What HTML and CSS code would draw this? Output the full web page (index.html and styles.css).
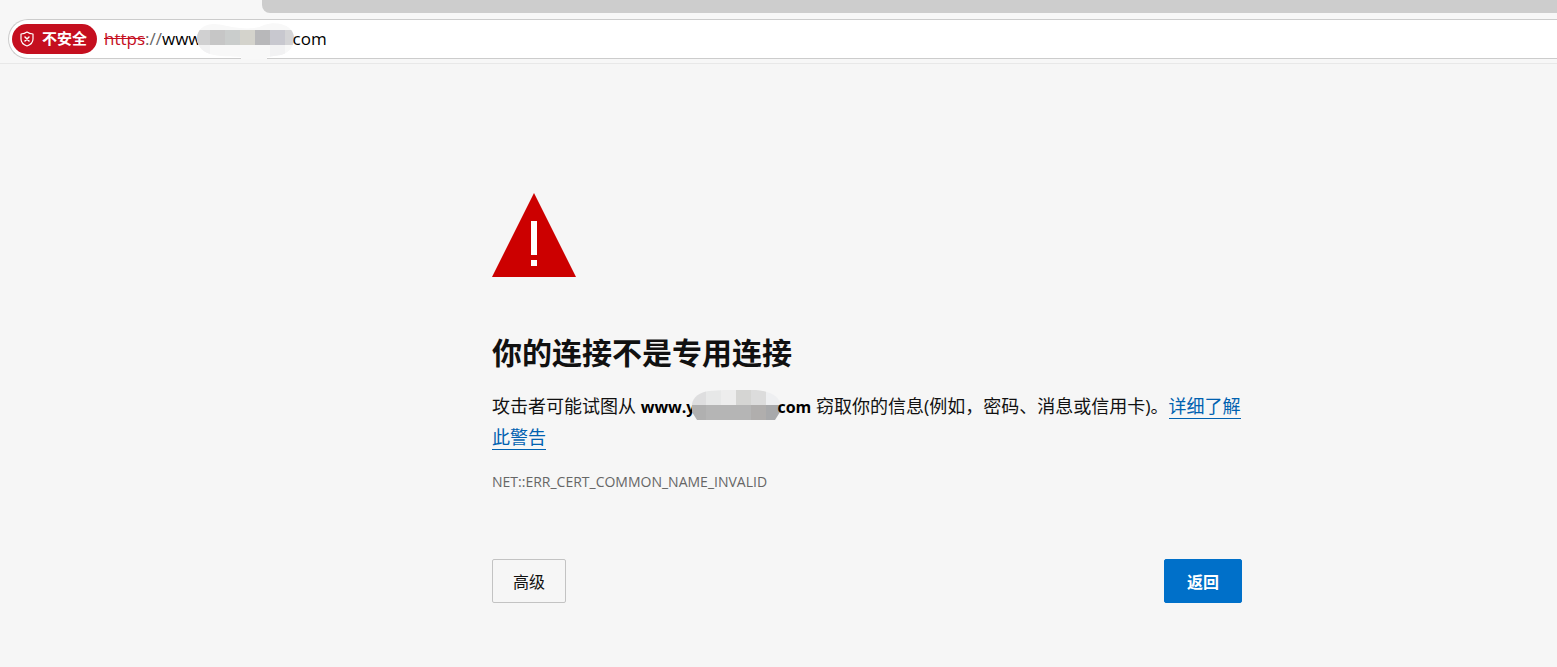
FILE: index.html
```
<!DOCTYPE html>
<html lang="zh-CN">
<head>
	<meta charset="utf-8">
	<title>隐私错误</title>
	<link rel="stylesheet" href="styles.css">
</head>

<body>
	<header class="toolbar">
		<div class="tabstrip"></div>
		<div class="address-bar">
			<button type="button" class="badge">
				<svg width="16" height="16" viewBox="0 0 16 16" fill="none" stroke="#fff" stroke-width="1.200" stroke-linecap="round" stroke-linejoin="round">
					<path d="M8 1C6.300 2.300 4.300 2.900 2 3v5c0 3.500 2.200 5.700 6 7 3.800-1.300 6-3.500 6-7V3C11.700 2.900 9.700 2.300 8 1z"/>
					<path d="M6 6l4 4M10 6l-4 4" stroke-width="1.500"/>
				</svg>
				<span>不安全</span>
			</button>
			<span class="url"><del>https</del><span class="sep">://</span>www</span>
			<svg class="url-mask" width="98" height="36" viewBox="0 0 98 36">
				<clipPath id="urlClip">
					<path d="M0 15C0 7 7 1 17 1c8 0 14 3 26 4s18 0 24-3c6-2 12-2 17-1 8 2 13 7 13 14 0 9-5 15-13 17l-14 2v2H44v-2c-12-1-21 0-31-3C4 28 0 22 0 15z"/>
				</clipPath>
				<g clip-path="url(#urlClip)" shape-rendering="crispEdges">
					<path fill="#f8f8f8" d="M0 0h98v36H0z"/>
					<path fill="#f2f2f3" d="M0 22h13v14H0zM73 22h15v14H73z"/>
					<path fill="#d0d0d1" d="M0 7h13v15H0z"/>
					<path fill="#c6c6c6" d="M13 7h15v15H13z"/>
					<path fill="#cacdcc" d="M28 7h15v15H28z"/>
					<path fill="#d4d3cc" d="M43 7h15v15H43z"/>
					<path fill="#b8b8ba" d="M58 7h15v15H58z"/>
					<path fill="#c8c8cf" d="M73 7h15v15H73z"/>
					<path fill="#d4d4d6" d="M88 7h10v15H88z"/>
				</g>
			</svg>
			<input class="url-input" type="text" value="com" aria-label="地址栏" spellcheck="false">
		</div>
	</header>

	<main class="page">
		<div class="content">
			<svg class="warning" width="84" height="84" viewBox="0 0 84 84">
				<path fill="#c00" d="M42 0l42 84H0z"/>
				<path fill="#fff" d="M39 28h6v34h-6zM39 67h6v6h-6z"/>
			</svg>

			<h1>你的连接不是专用连接</h1>

			<p class="message">攻击者可能试图从 <strong>www.y<svg class="host-mask" width="88" height="30" viewBox="0 0 88 30">
				<clipPath id="hostClip">
					<path d="M5 30L0 22v-8C1 7 8 2 17 1L32 0h32c12 1 21 5 24 12v10l-5 8z"/>
				</clipPath>
				<g clip-path="url(#hostClip)" shape-rendering="crispEdges">
					<path fill="#dededf" d="M0 0h14v15H0z"/>
					<path fill="#e7e8e8" d="M14 0h15v15H14z"/>
					<path fill="#ededed" d="M29 0h15v15H29z"/>
					<path fill="#d5d5d3" d="M44 0h15v15H44z"/>
					<path fill="#dcdcdc" d="M59 0h15v15H59z"/>
					<path fill="#eeeff1" d="M74 0h14v15H74z"/>
					<path fill="#b0b0b0" d="M0 15h14v15H0z"/>
					<path fill="#b5b5b5" d="M14 15h45v15H14z"/>
					<path fill="#b0aead" d="M59 15h15v15H59z"/>
					<path fill="#a8a9ab" d="M74 15h14v15H74z"/>
				</g>
			</svg>com</strong> 窃取你的信息(例如，密码、消息或信用卡)。<a href="#">详细了解此警告</a></p>

			<div class="error-code">NET::ERR_CERT_COMMON_NAME_INVALID</div>

			<div class="buttons">
				<button type="button" class="btn">高级</button>
				<button type="button" class="btn primary">返回</button>
			</div>
		</div>
	</main>
</body>
</html>
```

FILE: styles.css
```
body {
	margin: 0;
	background: #f6f6f6;
	color: #111;
	font-family: "Open Sans", "Noto Sans CJK SC", sans-serif;
	overflow-x: hidden;
}

button,
input {
	font-family: inherit;
}

/* browser toolbar */
.toolbar {
	background: #f7f7f7;
	border-bottom: 1px solid #e8e8e8;
	padding-bottom: 4px;
}

.tabstrip {
	height: 13px;
	margin-left: 262px;
	margin-bottom: 6px;
	background: #cdcdcd;
	border-bottom-left-radius: 8px;
}

.address-bar {
	display: flex;
	align-items: center;
	height: 38px;
	margin-left: 8px;
	padding-left: 3px;
	background: #fff;
	border: 1px solid #ccc;
	border-right: none;
	border-radius: 20px 0 0 20px;
}

.badge {
	display: flex;
	align-items: center;
	gap: 7px;
	height: 30px;
	padding: 0 10px 0 7px;
	border: none;
	border-radius: 15px;
	background: #c50f1f;
	color: #fff;
	font-size: 15px;
	font-weight: bold;
	white-space: nowrap;
}

.badge span {
	padding-bottom: 3px;
}

.url {
	margin-left: 7px;
	padding-bottom: 2px;
	font-size: 17px;
	color: #000;
}

.url del {
	color: #c50f1f;
}

.url .sep {
	color: #666;
}

.url-mask {
	flex: none;
	align-self: flex-end;
	margin: 0 -2px -1px -5px;
}

.url-input {
	flex: 1;
	min-width: 0;
	padding: 0 0 2px;
	border: none;
	outline: none;
	background: none;
	font-size: 17px;
	color: #000;
}

/* warning page */
.page {
	display: grid;
	grid-template-columns: 492fr minmax(0, 750px) 315fr;
}

.content {
	grid-column: 2;
	padding: 129px 0 60px;
}

.warning {
	display: block;
}

h1 {
	margin: 56px 0 18px;
	font-size: 30px;
	line-height: 40px;
}

.message {
	margin: 0;
	font-size: 18px;
	line-height: 30px;
}

.message strong {
	font-size: 16px;
	color: #000;
}

.host-mask {
	margin: -12px -3px -4px;
	vertical-align: middle;
}

.message a {
	color: #0061b0;
	text-decoration: none;
	border-bottom: 1px solid #0061b0;
}

.error-code {
	margin-top: 20px;
	font-size: 14px;
	line-height: 20px;
	color: #666;
}

.buttons {
	display: flex;
	justify-content: space-between;
	margin-top: 67px;
}

.btn {
	height: 44px;
	padding: 0 20px;
	border: 1px solid #c3c3c3;
	border-radius: 2px;
	background: none;
	color: #111;
	font-size: 16px;
}

.btn.primary {
	padding: 0 22px;
	border-color: #0070c9;
	background: #0070c9;
	color: #fff;
	font-weight: bold;
}
```
